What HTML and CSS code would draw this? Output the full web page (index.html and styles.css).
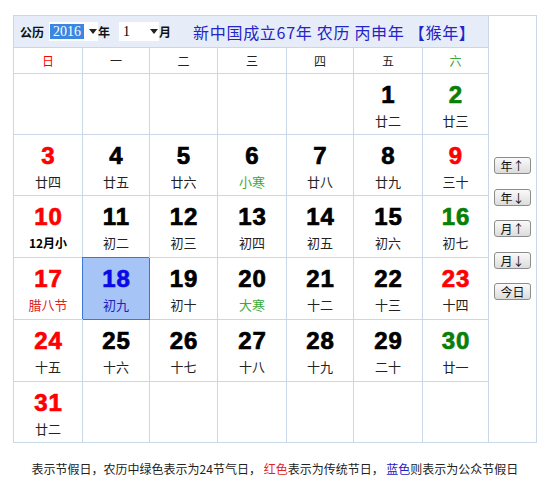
FILE: index.html
```html
<!DOCTYPE html>
<html lang="zh-CN">
<head>
<meta charset="utf-8">
<title>万年历</title>
<link rel="stylesheet" href="styles.css">
</head>
<body>
<div class="page">
  <div class="cal">
    <div class="main">
      <div class="head">
        <b class="lbl">公历</b>
        <span class="sel sel-y"><span class="val hl">2016</span><i class="arr"></i></span>
        <b class="lbl">年</b>
        <span class="sel sel-m"><span class="val">1</span><i class="arr"></i></span>
        <b class="lbl">月</b>
        <span class="title">新中国成立67年 农历 丙申年 【猴年】</span>
      </div>
      <div class="grid">
        <div class="wk c-red">日</div>
        <div class="wk">一</div>
        <div class="wk">二</div>
        <div class="wk">三</div>
        <div class="wk">四</div>
        <div class="wk">五</div>
        <div class="wk c-lgreen last">六</div>

        <div class="d"></div>
        <div class="d"></div>
        <div class="d"></div>
        <div class="d"></div>
        <div class="d"></div>
        <div class="d"><b class="n">1</b><span class="l">廿二</span></div>
        <div class="d last"><b class="n c-green">2</b><span class="l">廿三</span></div>

        <div class="d"><b class="n c-red">3</b><span class="l">廿四</span></div>
        <div class="d"><b class="n">4</b><span class="l">廿五</span></div>
        <div class="d"><b class="n">5</b><span class="l">廿六</span></div>
        <div class="d"><b class="n">6</b><span class="l c-lgreen">小寒</span></div>
        <div class="d"><b class="n">7</b><span class="l">廿八</span></div>
        <div class="d"><b class="n">8</b><span class="l">廿九</span></div>
        <div class="d last"><b class="n c-red">9</b><span class="l">三十</span></div>

        <div class="d"><b class="n c-red">10</b><span class="l month">12月小</span></div>
        <div class="d"><b class="n">11</b><span class="l">初二</span></div>
        <div class="d"><b class="n">12</b><span class="l">初三</span></div>
        <div class="d"><b class="n">13</b><span class="l">初四</span></div>
        <div class="d"><b class="n">14</b><span class="l">初五</span></div>
        <div class="d"><b class="n">15</b><span class="l">初六</span></div>
        <div class="d last"><b class="n c-green">16</b><span class="l">初七</span></div>

        <div class="d"><b class="n c-red">17</b><span class="l c-fest">腊八节</span></div>
        <div class="d today"><b class="n c-blue">18</b><span class="l c-dblue">初九</span></div>
        <div class="d"><b class="n">19</b><span class="l">初十</span></div>
        <div class="d"><b class="n">20</b><span class="l c-lgreen">大寒</span></div>
        <div class="d"><b class="n">21</b><span class="l">十二</span></div>
        <div class="d"><b class="n">22</b><span class="l">十三</span></div>
        <div class="d last"><b class="n c-red">23</b><span class="l">十四</span></div>

        <div class="d"><b class="n c-red">24</b><span class="l">十五</span></div>
        <div class="d"><b class="n">25</b><span class="l">十六</span></div>
        <div class="d"><b class="n">26</b><span class="l">十七</span></div>
        <div class="d"><b class="n">27</b><span class="l">十八</span></div>
        <div class="d"><b class="n">28</b><span class="l">十九</span></div>
        <div class="d"><b class="n">29</b><span class="l">二十</span></div>
        <div class="d last"><b class="n c-green">30</b><span class="l">廿一</span></div>

        <div class="d bottom"><b class="n c-red">31</b><span class="l">廿二</span></div>
        <div class="d bottom"></div>
        <div class="d bottom"></div>
        <div class="d bottom"></div>
        <div class="d bottom"></div>
        <div class="d bottom"></div>
        <div class="d bottom last"></div>
      </div>
    </div>
    <div class="side">
      <button class="btn">年↑</button>
      <button class="btn">年↓</button>
      <button class="btn">月↑</button>
      <button class="btn">月↓</button>
      <button class="btn">今日</button>
    </div>
  </div>
  <p class="foot">表示节假日，农历中绿色表示为24节气日， <span class="c-fest">红色</span>表示为传统节日， <span class="c-dblue">蓝色</span>则表示为公众节假日</p>
</div>
</body>
</html>
```

FILE: styles.css
```css
html, body {
  margin: 0;
  padding: 0;
  background: #fff;
}

body {
  font-family: "Noto Sans CJK SC", "Liberation Sans", sans-serif;
  color: #222;
}

.page {
  padding: 15px 0 0 13px;
  width: 524px;
}

.cal {
  display: flex;
  width: 524px;
  border: 1px solid #c8d8e8;
  box-sizing: border-box;
}

.main {
  width: 475px;
}

.head {
  height: 32px;
  box-sizing: border-box;
  background: #e6edf8;
  border-bottom: 1px solid #c8d8e8;
  border-right: 1px solid #c8d8e8;
  display: flex;
  align-items: center;
  padding-left: 6px;
}

.lbl {
  font-size: 12px;
  font-weight: bold;
  color: #111;
  line-height: 16px;
}

.sel {
  display: flex;
  align-items: center;
  height: 19px;
  background: #fff;
  box-sizing: border-box;
  font-family: "Liberation Serif", "Noto Sans CJK SC", serif;
  font-size: 14px;
  color: #000;
}

.sel-y {
  width: 49px;
  margin-left: 5px;
  padding-left: 1px;
}

.sel-m {
  width: 40px;
  margin-left: 9px;
  padding-left: 4px;
}

.val {
  flex: 1;
  line-height: 15px;
}

.val.hl {
  flex: 0 0 auto;
  background: #3a86e0;
  color: #fff;
  padding: 0 3px;
  margin-right: 5px;
}

.arr {
  width: 0;
  height: 0;
  border-left: 4px solid transparent;
  border-right: 4px solid transparent;
  border-top: 5px solid #222;
}

.sel-m .arr {
  margin-right: 1px;
}

.title {
  margin-left: 22px;
  font-size: 16px;
  letter-spacing: 0.7px;
  color: #2424c8;
  line-height: 20px;
  white-space: pre;
}

.grid {
  display: grid;
  grid-template-columns: 69px 67px 68px 69px 67px 69px 66px;
  grid-template-rows: 26px 61px 61px 62px 62px 62px 60px;
}

.wk,
.d {
  border-right: 1px solid #c8d8e8;
  border-bottom: 1px solid #c8d8e8;
  box-sizing: border-box;
}

.wk {
  font-size: 12px;
  line-height: 25px;
  text-align: center;
  color: #222;
}

.d {
  display: flex;
  flex-direction: column;
  align-items: center;
  padding-top: 7px;
}

.d.bottom {
  border-bottom: none;
}

.n {
  font-family: "Liberation Sans", Arial, sans-serif;
  font-weight: bold;
  font-size: 24px;
  line-height: 28px;
  color: #000;
  -webkit-text-stroke: 0.7px currentColor;
  letter-spacing: 1px;
  padding-left: 1px;
}

.l {
  margin-top: 3px;
  font-size: 13px;
  line-height: 17px;
  color: #222;
}

.l.month {
  font-size: 12px;
  font-weight: bold;
  color: #000;
}

.today {
  background: #a6c4f6;
  border-right-color: #3a78d4;
  border-bottom-color: #3a78d4;
  box-shadow: -1px -1px 0 0 #3a78d4;
}

.c-red { color: #f00; }
.c-green { color: #087f08; }
.c-lgreen { color: #3aaa3a; }
.c-blue { color: #0a0ae6; }
.c-dblue { color: #2222c0; }
.c-fest { color: #e02424; }

.side {
  width: 47px;
  display: flex;
  flex-direction: column;
  align-items: center;
  padding-top: 141px;
  gap: 14.5px;
}

.btn {
  width: 37px;
  height: 17px;
  padding: 0;
  margin: 0;
  border: 1px solid #8c8c8c;
  border-radius: 3px;
  background: linear-gradient(#fafafa, #dcdcdc);
  font-family: "Noto Sans CJK SC", sans-serif;
  font-size: 12px;
  line-height: 15px;
  color: #111;
}

.foot {
  margin: 17px 0 0;
  text-align: center;
  font-size: 12px;
  line-height: 18px;
  color: #222;
}
```
